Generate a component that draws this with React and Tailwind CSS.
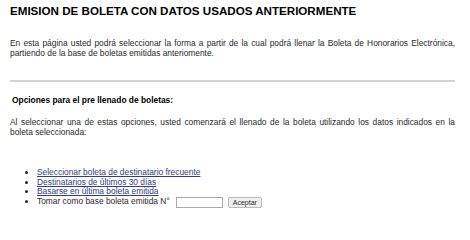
export default function App() {
  return (
    <div className="min-h-[221px] w-[470px] bg-white px-[10px] pt-[3px] text-[8.4px] leading-[10px] text-[#2a2a2a]" style={{ fontFamily: '"Liberation Sans", Arial, sans-serif' }}>
      <h1 className="text-[11.6px] font-bold leading-[15px] text-black">
        EMISION DE BOLETA CON DATOS USADOS ANTERIORMENTE
      </h1>

      <p className="mt-[20px] w-[445px] text-justify">
        En esta página usted podrá seleccionar la forma a partir de la cual podrá llenar la Boleta de Honorarios Electrónica, partiendo de la base de boletas emitidas anteriomente.
      </p>

      <hr className="mt-[22px] w-[445px] border-t-2 border-[#d4d4d4]" />

      <h2 className="mt-[13px] pl-[2px] font-bold text-black">
        Opciones para el pre llenado de boletas:
      </h2>

      <p className="mt-[12px] w-[445px] text-justify">
        Al seleccionar una de estas opciones, usted comenzará el llenado de la boleta utilizando los datos indicados en la boleta seleccionada:
      </p>

      <ul className="mt-[31px] list-disc pl-[27px] leading-[9.5px]">
        <li><a href="#" className="text-[#333d8a] underline">Seleccionar boleta de destinatario frecuente</a></li>
        <li><a href="#" className="text-[#333d8a] underline">Destinatarios de últimos 30 días</a></li>
        <li><a href="#" className="text-[#333d8a] underline">Basarse en última boleta emitida</a></li>
        <li>
          <div className="flex items-center">
            <span>Tomar como base boleta emitida N°</span>
            <input type="text" className="ml-[6px] h-[11px] w-[47px] border border-[#aaa] bg-white" />
            <button type="button" className="ml-[5px] h-[11px] rounded-[2px] border border-[#bbb] bg-[#f0f0f0] px-[4px] text-[7px] leading-[9px]">
              Aceptar
            </button>
          </div>
        </li>
      </ul>
    </div>
  );
}
